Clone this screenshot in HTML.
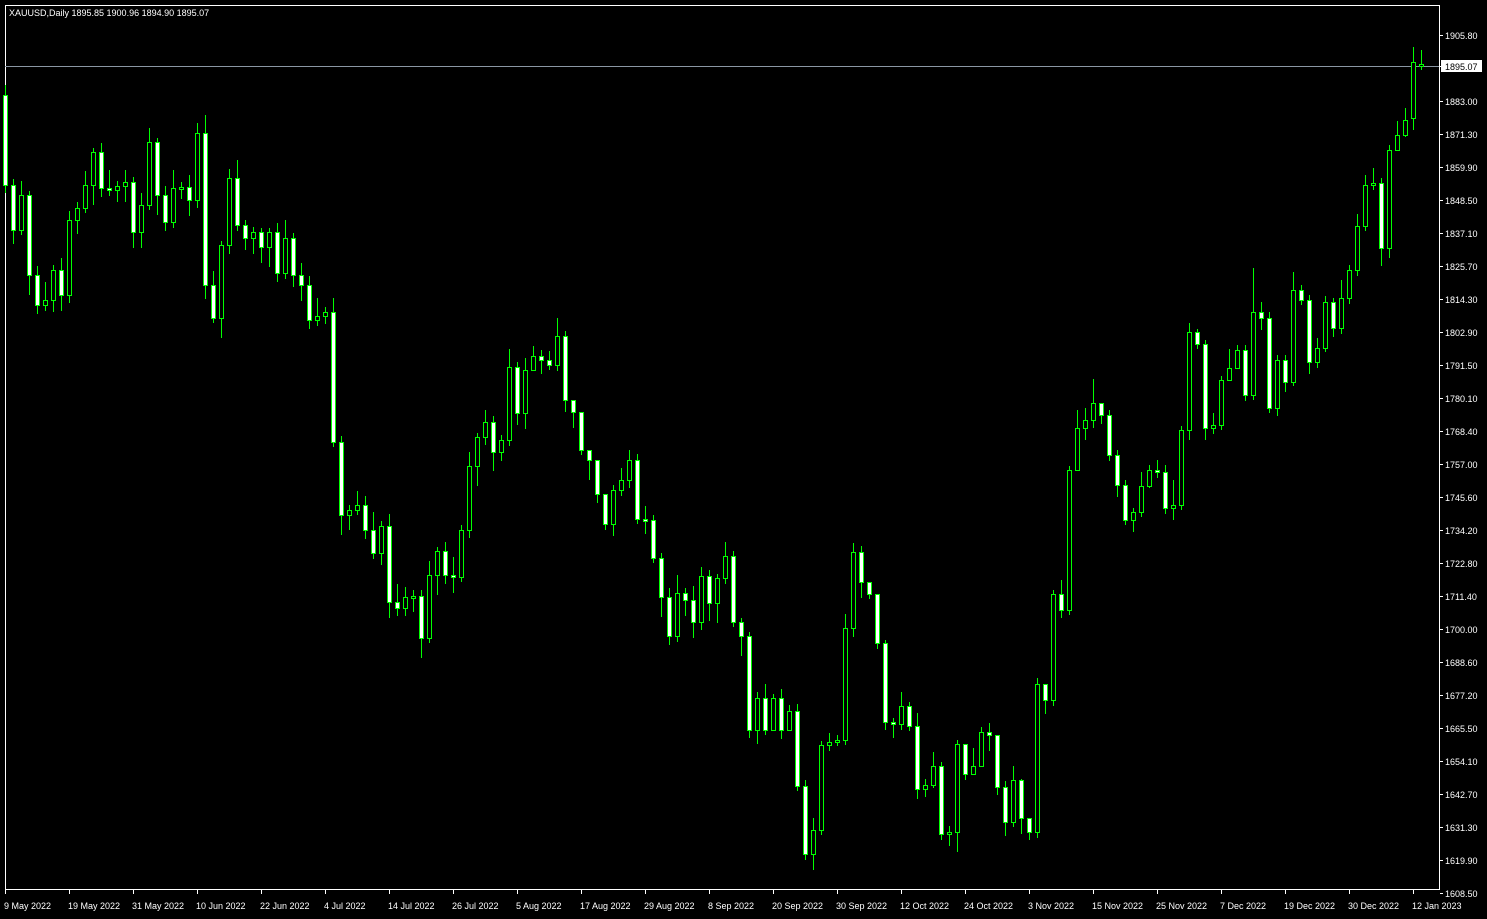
<!DOCTYPE html>
<html><head><meta charset="utf-8">
<style>
html,body{margin:0;padding:0;background:#000;width:1487px;height:919px;overflow:hidden}
svg{display:block}
text{font-family:"Liberation Sans",sans-serif;font-size:9px;fill:#fff}
</style></head><body>
<svg width="1487" height="919" xmlns="http://www.w3.org/2000/svg" shape-rendering="crispEdges">
<rect x="0" y="0" width="1487" height="919" fill="#000"/>
<rect x="5.5" y="5.5" width="1434" height="884" fill="none" stroke="#fff"/>
<line x1="5" y1="66.5" x2="1439" y2="66.5" stroke="#8a96a3"/>
<text x="9" y="16">XAUUSD,Daily  1895.85 1900.96 1894.90 1895.07</text>
<path fill="none" stroke="#00ff00" d="M5.5 85V193M13.5 179V244M21.5 181V235M29.5 191V295M37.5 266V314M45.5 282V311M53.5 265V312M61.5 258V311M69.5 211V303M77.5 202V234M85.5 171V213M93.5 148V205M101.5 143V197M109.5 170V196M117.5 181V202M125.5 170V202M133.5 177V248M141.5 193V248M149.5 128V210M157.5 138V215M165.5 186V231M173.5 170V228M181.5 182V199M189.5 175V216M197.5 123V208M205.5 115V299M213.5 271V323M221.5 241V338M229.5 169V254M237.5 160V231M245.5 220V250M253.5 227V254M261.5 228V263M269.5 228V267M277.5 223V282M285.5 220V279M293.5 233V287M301.5 263V301M309.5 276V329M317.5 298V326M325.5 307V324M333.5 298V447M341.5 436V535M349.5 505V530M357.5 491V515M365.5 496V539M373.5 512V559M381.5 521V565M389.5 514V618M397.5 584V616M405.5 587V616M413.5 590V612M421.5 590V658M429.5 561V643M437.5 547V595M445.5 542V584M453.5 557V593M461.5 525V582M469.5 452V538M477.5 433V486M485.5 410V445M493.5 416V471M501.5 435V461M509.5 349V446M517.5 362V425M525.5 358V429M533.5 346V364M541.5 350V374M549.5 351V370M557.5 318V371M565.5 331V412M573.5 400V428M581.5 436V455M589.5 456V480M597.5 485V503M605.5 506V530M613.5 485V536M621.5 468V496M629.5 450V488M637.5 454V524M645.5 506V534M653.5 515V563M661.5 553V617M669.5 588V645M677.5 575V642M685.5 588V616M693.5 586V638M701.5 567V630M709.5 570V621M717.5 574V623M725.5 542V584M733.5 551V627M741.5 618V656M749.5 632V738M757.5 692V744M765.5 684V735M773.5 694V718M781.5 689V739M789.5 705V730M797.5 704V791M805.5 780V860M813.5 818V870M821.5 741V835M829.5 733V751M837.5 735V746M845.5 614V745M853.5 543V637M861.5 546V598M869.5 582V599M877.5 629V649M885.5 640V730M893.5 718V738M901.5 692V730M909.5 702V731M917.5 713V799M925.5 779V797M933.5 752V788M941.5 762V840M949.5 826V846M957.5 740V852M965.5 765V780M973.5 748V772M981.5 727V744M989.5 723V751M997.5 778V795M1005.5 781V836M1013.5 766V827M1021.5 779V834M1029.5 822V840M1037.5 678V838M1045.5 684V714M1053.5 590V706M1061.5 580V618M1069.5 466V615M1077.5 410V434M1085.5 408V440M1093.5 379V428M1101.5 406V424M1109.5 410V461M1117.5 450V497M1125.5 480V525M1133.5 508V532M1141.5 472V517M1149.5 465V488M1157.5 460V478M1165.5 465V514M1173.5 480V520M1181.5 426V510M1189.5 323V440M1197.5 329V349M1205.5 340V440M1213.5 413V434M1221.5 376V430M1229.5 349V374M1237.5 345V368M1245.5 345V401M1253.5 268V400M1261.5 302V330M1269.5 312V413M1277.5 355V416M1285.5 355V392M1293.5 272V386M1301.5 285V305M1309.5 295V374M1317.5 338V368M1325.5 296V352M1333.5 298V337M1341.5 280V334M1349.5 265V304M1357.5 214V276M1365.5 175V231M1373.5 168V190M1381.5 178V266M1389.5 145V258M1397.5 121V151M1405.5 108V137M1413.5 47V130M1421.5 50V70"/>
<path fill="#fff" stroke="#00ff00" d="M3.5 95.5h4v90h-4zM11.5 185.5h4v45h-4zM27.5 195.5h4v80h-4zM35.5 275.5h4v30h-4zM59.5 270.5h4v25h-4zM99.5 152.5h4v36h-4zM107.5 188.5h4v2h-4zM131.5 182.5h4v50h-4zM155.5 142.5h4v53h-4zM163.5 195.5h4v27h-4zM187.5 187.5h4v13h-4zM203.5 133.5h4v152h-4zM211.5 285.5h4v33h-4zM235.5 178.5h4v47h-4zM243.5 225.5h4v13h-4zM259.5 232.5h4v15h-4zM275.5 232.5h4v41h-4zM291.5 238.5h4v37h-4zM299.5 275.5h4v10h-4zM307.5 285.5h4v35h-4zM331.5 312.5h4v130h-4zM339.5 442.5h4v73h-4zM363.5 505.5h4v25h-4zM371.5 530.5h4v23h-4zM387.5 526.5h4v76h-4zM395.5 602.5h4v6h-4zM419.5 596.5h4v42h-4zM443.5 551.5h4v24h-4zM451.5 575.5h4v2h-4zM491.5 422.5h4v30h-4zM515.5 367.5h4v46h-4zM539.5 356.5h4v4h-4zM547.5 360.5h4v5h-4zM563.5 336.5h4v64h-4zM571.5 400.5h4v12h-4zM579.5 412.5h4v38h-4zM587.5 450.5h4v10h-4zM595.5 460.5h4v34h-4zM603.5 494.5h4v30h-4zM635.5 460.5h4v59h-4zM643.5 519.5h4v2h-4zM651.5 520.5h4v38h-4zM659.5 558.5h4v39h-4zM667.5 597.5h4v39h-4zM683.5 593.5h4v7h-4zM691.5 600.5h4v22h-4zM707.5 576.5h4v27h-4zM731.5 556.5h4v66h-4zM739.5 622.5h4v14h-4zM747.5 636.5h4v94h-4zM763.5 698.5h4v32h-4zM779.5 698.5h4v32h-4zM795.5 711.5h4v75h-4zM803.5 786.5h4v68h-4zM859.5 552.5h4v30h-4zM867.5 582.5h4v12h-4zM875.5 594.5h4v49h-4zM883.5 643.5h4v79h-4zM891.5 722.5h4v2h-4zM907.5 706.5h4v20h-4zM915.5 726.5h4v63h-4zM939.5 766.5h4v68h-4zM963.5 744.5h4v30h-4zM987.5 732.5h4v3h-4zM995.5 735.5h4v52h-4zM1003.5 787.5h4v35h-4zM1019.5 780.5h4v38h-4zM1027.5 818.5h4v14h-4zM1043.5 684.5h4v16h-4zM1059.5 594.5h4v16h-4zM1099.5 403.5h4v12h-4zM1107.5 415.5h4v40h-4zM1115.5 455.5h4v30h-4zM1123.5 485.5h4v35h-4zM1155.5 470.5h4v2h-4zM1163.5 472.5h4v36h-4zM1195.5 332.5h4v12h-4zM1203.5 344.5h4v84h-4zM1243.5 350.5h4v45h-4zM1259.5 312.5h4v6h-4zM1267.5 318.5h4v90h-4zM1283.5 360.5h4v22h-4zM1299.5 290.5h4v10h-4zM1307.5 300.5h4v62h-4zM1331.5 302.5h4v26h-4zM1379.5 183.5h4v65h-4z"/>
<path fill="#000" stroke="#00ff00" d="M19.5 195.5h4v35h-4zM43.5 300.5h4v5h-4zM51.5 270.5h4v30h-4zM67.5 220.5h4v75h-4zM75.5 208.5h4v12h-4zM83.5 185.5h4v23h-4zM91.5 152.5h4v33h-4zM115.5 186.5h4v4h-4zM123.5 182.5h4v4h-4zM139.5 205.5h4v27h-4zM147.5 142.5h4v63h-4zM171.5 188.5h4v34h-4zM179.5 187.5h4v2h-4zM195.5 133.5h4v67h-4zM219.5 245.5h4v73h-4zM227.5 178.5h4v67h-4zM251.5 232.5h4v6h-4zM267.5 232.5h4v15h-4zM283.5 238.5h4v35h-4zM315.5 316.5h4v4h-4zM323.5 312.5h4v4h-4zM347.5 510.5h4v5h-4zM355.5 505.5h4v5h-4zM379.5 526.5h4v27h-4zM403.5 597.5h4v11h-4zM411.5 596.5h4v2h-4zM427.5 575.5h4v63h-4zM435.5 551.5h4v24h-4zM459.5 530.5h4v47h-4zM467.5 466.5h4v64h-4zM475.5 437.5h4v29h-4zM483.5 422.5h4v15h-4zM499.5 440.5h4v12h-4zM507.5 367.5h4v73h-4zM523.5 370.5h4v43h-4zM531.5 356.5h4v14h-4zM555.5 336.5h4v29h-4zM611.5 490.5h4v34h-4zM619.5 480.5h4v10h-4zM627.5 460.5h4v20h-4zM675.5 593.5h4v43h-4zM699.5 576.5h4v46h-4zM715.5 578.5h4v25h-4zM723.5 556.5h4v22h-4zM755.5 698.5h4v32h-4zM771.5 698.5h4v32h-4zM787.5 711.5h4v19h-4zM811.5 830.5h4v24h-4zM819.5 745.5h4v85h-4zM827.5 742.5h4v3h-4zM835.5 740.5h4v2h-4zM843.5 628.5h4v112h-4zM851.5 552.5h4v76h-4zM899.5 706.5h4v18h-4zM923.5 785.5h4v4h-4zM931.5 766.5h4v19h-4zM947.5 832.5h4v2h-4zM955.5 744.5h4v88h-4zM971.5 766.5h4v8h-4zM979.5 732.5h4v34h-4zM1011.5 780.5h4v42h-4zM1035.5 684.5h4v148h-4zM1051.5 594.5h4v106h-4zM1067.5 470.5h4v140h-4zM1075.5 428.5h4v42h-4zM1083.5 420.5h4v8h-4zM1091.5 403.5h4v17h-4zM1131.5 512.5h4v8h-4zM1139.5 486.5h4v26h-4zM1147.5 470.5h4v16h-4zM1171.5 505.5h4v3h-4zM1179.5 430.5h4v75h-4zM1187.5 332.5h4v98h-4zM1211.5 425.5h4v3h-4zM1219.5 380.5h4v45h-4zM1227.5 368.5h4v12h-4zM1235.5 350.5h4v18h-4zM1251.5 312.5h4v83h-4zM1275.5 360.5h4v48h-4zM1291.5 290.5h4v92h-4zM1315.5 348.5h4v14h-4zM1323.5 302.5h4v46h-4zM1339.5 298.5h4v30h-4zM1347.5 270.5h4v28h-4zM1355.5 226.5h4v44h-4zM1363.5 185.5h4v41h-4zM1371.5 183.5h4v2h-4zM1387.5 150.5h4v98h-4zM1395.5 135.5h4v15h-4zM1403.5 120.5h4v15h-4zM1411.5 62.5h4v56h-4zM1419.5 64.5h4v2h-4z"/>
<path stroke="#fff" fill="none" d="M1440 35.5h3M1440 66.5h3M1440 101.5h3M1440 134.5h3M1440 167.5h3M1440 200.5h3M1440 233.5h3M1440 266.5h3M1440 299.5h3M1440 332.5h3M1440 365.5h3M1440 398.5h3M1440 431.5h3M1440 464.5h3M1440 497.5h3M1440 530.5h3M1440 563.5h3M1440 596.5h3M1440 629.5h3M1440 662.5h3M1440 695.5h3M1440 728.5h3M1440 761.5h3M1440 794.5h3M1440 827.5h3M1440 860.5h3M1440 893.5h3M5.5 890v4M69.5 890v4M133.5 890v4M197.5 890v4M261.5 890v4M325.5 890v4M389.5 890v4M453.5 890v4M517.5 890v4M581.5 890v4M645.5 890v4M709.5 890v4M773.5 890v4M837.5 890v4M901.5 890v4M965.5 890v4M1029.5 890v4M1093.5 890v4M1157.5 890v4M1221.5 890v4M1285.5 890v4M1349.5 890v4M1413.5 890v4"/>
<rect x="1441" y="60" width="41" height="12" fill="#fff"/>
<text x="1445" y="70" style="fill:#000">1895.07</text>
<text x="1445" y="39">1905.80</text>
<text x="1445" y="105">1883.00</text>
<text x="1445" y="138">1871.30</text>
<text x="1445" y="171">1859.90</text>
<text x="1445" y="204">1848.50</text>
<text x="1445" y="237">1837.10</text>
<text x="1445" y="270">1825.70</text>
<text x="1445" y="303">1814.30</text>
<text x="1445" y="336">1802.90</text>
<text x="1445" y="369">1791.50</text>
<text x="1445" y="402">1780.10</text>
<text x="1445" y="435">1768.40</text>
<text x="1445" y="468">1757.00</text>
<text x="1445" y="501">1745.60</text>
<text x="1445" y="534">1734.20</text>
<text x="1445" y="567">1722.80</text>
<text x="1445" y="600">1711.40</text>
<text x="1445" y="633">1700.00</text>
<text x="1445" y="666">1688.60</text>
<text x="1445" y="699">1677.20</text>
<text x="1445" y="732">1665.50</text>
<text x="1445" y="765">1654.10</text>
<text x="1445" y="798">1642.70</text>
<text x="1445" y="831">1631.30</text>
<text x="1445" y="864">1619.90</text>
<text x="1445" y="897">1608.50</text>
<text x="4" y="909">9 May 2022</text>
<text x="68" y="909">19 May 2022</text>
<text x="132" y="909">31 May 2022</text>
<text x="196" y="909">10 Jun 2022</text>
<text x="260" y="909">22 Jun 2022</text>
<text x="324" y="909">4 Jul 2022</text>
<text x="388" y="909">14 Jul 2022</text>
<text x="452" y="909">26 Jul 2022</text>
<text x="516" y="909">5 Aug 2022</text>
<text x="580" y="909">17 Aug 2022</text>
<text x="644" y="909">29 Aug 2022</text>
<text x="708" y="909">8 Sep 2022</text>
<text x="772" y="909">20 Sep 2022</text>
<text x="836" y="909">30 Sep 2022</text>
<text x="900" y="909">12 Oct 2022</text>
<text x="964" y="909">24 Oct 2022</text>
<text x="1028" y="909">3 Nov 2022</text>
<text x="1092" y="909">15 Nov 2022</text>
<text x="1156" y="909">25 Nov 2022</text>
<text x="1220" y="909">7 Dec 2022</text>
<text x="1284" y="909">19 Dec 2022</text>
<text x="1348" y="909">30 Dec 2022</text>
<text x="1412" y="909">12 Jan 2023</text>
</svg>
</body></html>
